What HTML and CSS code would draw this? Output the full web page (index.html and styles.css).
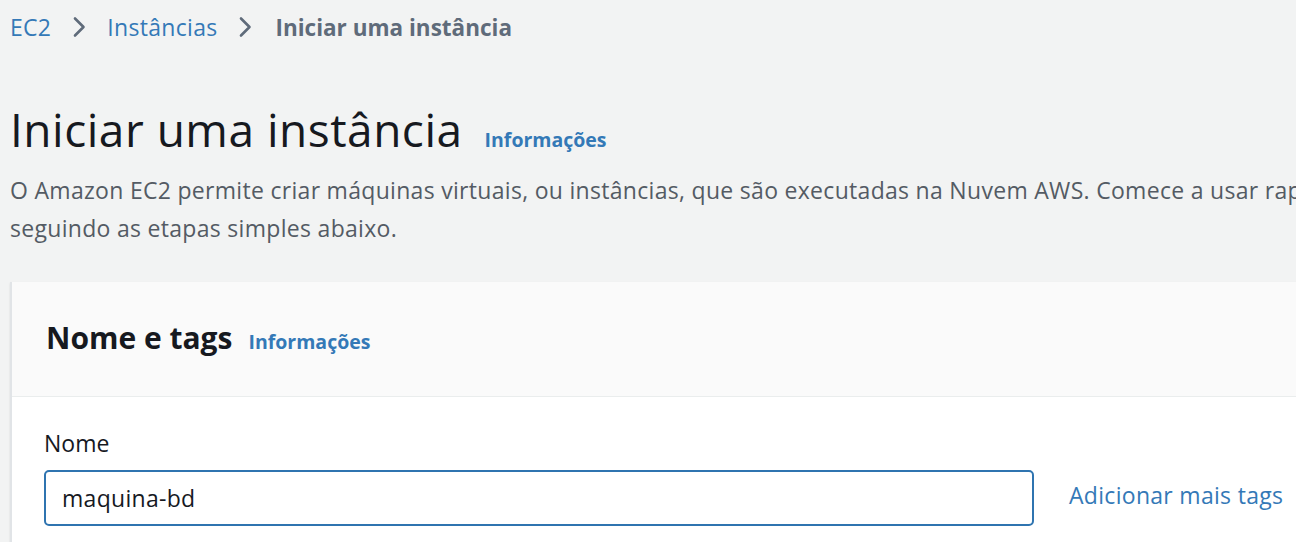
FILE: index.html
```html
<!DOCTYPE html>
<html lang="pt-BR">
<head>
<meta charset="utf-8">
<title>Iniciar uma instância</title>
<link rel="stylesheet" href="styles.css">
</head>
<body>
<div class="page">
  <nav class="breadcrumbs">
    <a class="crumb-link" href="#">EC2</a>
    <svg class="chev" width="22" height="24" viewBox="0 0 22 24"><path d="M7 3.5 L15.5 12 L7 20.5" fill="none" stroke="#5f6b7a" stroke-width="2.6" stroke-linecap="round" stroke-linejoin="round"/></svg>
    <a class="crumb-link" href="#">Instâncias</a>
    <svg class="chev" width="22" height="24" viewBox="0 0 22 24"><path d="M7 3.5 L15.5 12 L7 20.5" fill="none" stroke="#5f6b7a" stroke-width="2.6" stroke-linecap="round" stroke-linejoin="round"/></svg>
    <span class="crumb-current">Iniciar uma instância</span>
  </nav>

  <header class="page-header">
    <div class="title-row">
      <h1 class="title">Iniciar uma instância</h1>
      <a class="info-link" href="#">Informações</a>
    </div>
    <p class="desc">O Amazon EC2 permite criar máquinas virtuais, ou instâncias, que são executadas na Nuvem AWS. Comece a usar rapidamente<br>seguindo as etapas simples abaixo.</p>
  </header>

  <section class="card">
    <div class="card-header">
      <h2 class="card-title">Nome e tags</h2>
      <a class="info-link" href="#">Informações</a>
    </div>
    <div class="card-body">
      <label class="field-label" for="nome">Nome</label>
      <div class="field-row">
        <input id="nome" class="text-input" type="text" value="maquina-bd">
        <a class="add-tags" href="#">Adicionar mais tags</a>
      </div>
    </div>
  </section>
</div>
</body>
</html>
```

FILE: styles.css
```css
html, body {
  margin: 0;
  padding: 0;
}
body {
  background: #f2f3f3;
  font-family: "Open Sans", "Noto Sans", sans-serif;
  overflow: hidden;
  width: 1296px;
  height: 542px;
}
.page {
  width: 1600px;
  padding-left: 10px;
}
.breadcrumbs {
  display: flex;
  align-items: center;
  height: 54px;
  gap: 17px;
}
.crumb-link {
  color: #3479b7;
  text-decoration: none;
  font-size: 23px;
  letter-spacing: 0.3px;
}
.crumb-current {
  color: #5f6b7a;
  font-weight: 700;
  font-size: 22.5px;
  margin-left: 2px;
}
.chev {
  display: block;
}
.page-header {
  padding-top: 47px;
}
.title-row {
  display: flex;
  align-items: baseline;
  gap: 22px;
}
.title {
  margin: 0;
  font-size: 46px;
  font-weight: 400;
  letter-spacing: 0.5px;
  color: #16191f;
  line-height: 56px;
}
.info-link {
  color: #3479b7;
  font-size: 19.5px;
  font-weight: 700;
  text-decoration: none;
}
.desc {
  margin: 14px 0 0;
  font-size: 23px;
  letter-spacing: 0.3px;
  line-height: 38px;
  color: #545b64;
}
.card {
  margin-top: 35px;
  background: #ffffff;
  border-left: 2px solid #e1e4e7;
  box-shadow: 0 1px 2px rgba(0,0,0,0.1);
}
.card-header {
  display: flex;
  align-items: baseline;
  gap: 16px;
  height: 115px;
  box-sizing: border-box;
  padding: 36px 0 0 34px;
  background: #fafafa;
  border-bottom: 1px solid #eaeded;
}
.card-title {
  margin: 0;
  font-size: 30px;
  line-height: 40px;
  font-weight: 700;
  color: #16191f;
}
.card-body {
  padding: 32px 0 30px 32px;
}
.field-label {
  display: block;
  font-size: 23px;
  color: #16191f;
  line-height: 28px;
  margin-bottom: 13px;
}
.field-row {
  display: flex;
  align-items: center;
  gap: 35px;
}
.text-input {
  width: 990px;
  height: 56px;
  box-sizing: border-box;
  border: 2px solid #2f74b0;
  border-radius: 5px;
  padding: 0 16px;
  font-family: "Open Sans", "Noto Sans", sans-serif;
  font-size: 23px;
  letter-spacing: 0.3px;
  color: #16191f;
  background: #ffffff;
  outline: none;
}
.add-tags {
  color: #3479b7;
  font-size: 23px;
  letter-spacing: 0.3px;
  text-decoration: none;
  margin-top: -6px;
}
```
